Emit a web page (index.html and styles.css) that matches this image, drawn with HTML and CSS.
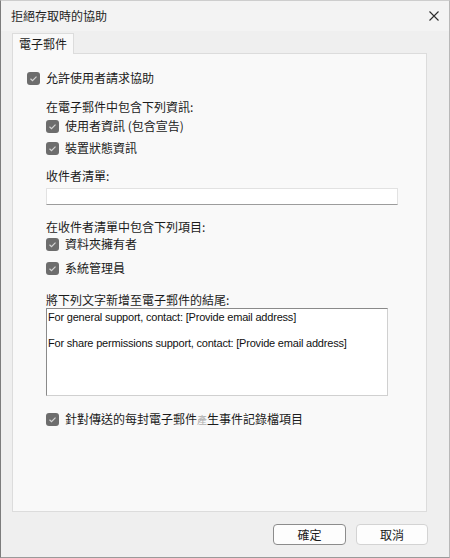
FILE: index.html
```html
<!DOCTYPE html>
<html lang="zh-Hant">
<head>
<meta charset="utf-8">
<title>拒絕存取時的協助</title>
<link rel="stylesheet" href="styles.css">
</head>
<body>
<div class="window">
  <div class="titlebar">
    <span class="title">拒絕存取時的協助</span>
    <svg class="close" width="10" height="10" viewBox="0 0 10 10"><path d="M0.5 0.5 L9.5 9.5 M9.5 0.5 L0.5 9.5" stroke="#2b2b2b" stroke-width="1.1" fill="none"/></svg>
  </div>
  <div class="body">
    <div class="tab">電子郵件</div>
    <div class="panel">
      <div class="row r1"><span class="cb"><svg width="13" height="13" viewBox="0 0 13 13"><path d="M3.5 6.8 L5.5 8.6 L9.5 4.6" stroke="#d6d6d6" stroke-width="1.2" fill="none"/></svg></span><span>允許使用者請求協助</span></div>
      <div class="group">
        <div class="label l1">在電子郵件中包含下列資訊:</div>
        <div class="row c1"><span class="cb"><svg width="13" height="13" viewBox="0 0 13 13"><path d="M3.5 6.8 L5.5 8.6 L9.5 4.6" stroke="#d6d6d6" stroke-width="1.2" fill="none"/></svg></span><span>使用者資訊 (包含宣告)</span></div>
        <div class="row c2"><span class="cb"><svg width="13" height="13" viewBox="0 0 13 13"><path d="M3.5 6.8 L5.5 8.6 L9.5 4.6" stroke="#d6d6d6" stroke-width="1.2" fill="none"/></svg></span><span>裝置狀態資訊</span></div>
        <div class="label l2">收件者清單:</div>
        <div class="input"></div>
        <div class="label l3">在收件者清單中包含下列項目:</div>
        <div class="row c3"><span class="cb"><svg width="13" height="13" viewBox="0 0 13 13"><path d="M3.5 6.8 L5.5 8.6 L9.5 4.6" stroke="#d6d6d6" stroke-width="1.2" fill="none"/></svg></span><span>資料夾擁有者</span></div>
        <div class="row c4"><span class="cb"><svg width="13" height="13" viewBox="0 0 13 13"><path d="M3.5 6.8 L5.5 8.6 L9.5 4.6" stroke="#d6d6d6" stroke-width="1.2" fill="none"/></svg></span><span>系統管理員</span></div>
        <div class="label l4">將下列文字新增至電子郵件的結尾:</div>
        <div class="textbox">
          <div class="line">For general support, contact: [Provide email address]</div>
          <div class="line">&nbsp;</div>
          <div class="line">For share permissions support, contact: [Provide email address]</div>
        </div>
        <div class="row c5"><span class="cb"><svg width="13" height="13" viewBox="0 0 13 13"><path d="M3.5 6.8 L5.5 8.6 L9.5 4.6" stroke="#d6d6d6" stroke-width="1.2" fill="none"/></svg></span><span>針對傳送的每封電子郵件<span class="odd">產</span>生事件記錄檔項目</span></div>
      </div>
    </div>
    <div class="buttons">
      <div class="btn default">確定</div>
      <div class="btn">取消</div>
    </div>
  </div>
</div>
</body>
</html>
```
FILE: styles.css
```css
html, body {
  margin: 0;
  padding: 0;
  background: #efefef;
}
body {
  font-family: "Noto Sans CJK TC", "Noto Sans", sans-serif;
  font-size: 12px;
  color: #1b1b1b;
}
.window {
  width: 450px;
  height: 558px;
  box-sizing: border-box;
  border-top: 1px solid #cdcdcd;
  border-left: 1px solid #7c7c7c;
  border-right: 1px solid #b8b8b8;
  border-bottom: 1px solid #9a9a9a;
  background: #efefef;
  display: flex;
  flex-direction: column;
}
.titlebar {
  height: 30px;
  flex: none;
  background: #f3f3f3;
  display: flex;
  align-items: center;
  justify-content: space-between;
  padding: 0 10px 0 10px;
}
.title {
  line-height: 16px;
  color: #1f1f1f;
}
.close {
  display: block;
}
.body {
  flex: 1;
  padding: 2px 22px 0 11px;
  display: flex;
  flex-direction: column;
}
.tab {
  width: 62px;
  height: 21px;
  box-sizing: border-box;
  border: 1px solid #dcdcdc;
  border-bottom: none;
  background: #f9f9f9;
  padding-left: 6px;
  line-height: 19px;
  margin-bottom: -1px;
  position: relative;
  z-index: 1;
}
.panel {
  height: 459px;
  box-sizing: border-box;
  border: 1px solid #dcdcdc;
  background: #f9f9f9;
  padding: 16px 0 0 14px;
}
.row {
  height: 16px;
  display: flex;
  align-items: center;
  gap: 6px;
  line-height: 16px;
}
.cb {
  width: 13px;
  height: 13px;
  border-radius: 3px;
  background: #6d6d6d;
  flex: none;
  display: block;
}
.cb svg {
  display: block;
}
.group {
  margin-left: 19px;
}
.label {
  height: 16px;
  line-height: 16px;
}
.l1 { margin-top: 13px; }
.c1 { margin-top: 3px; }
.c2 { margin-top: 6px; }
.l2 { margin-top: 12px; }
.input {
  margin-top: 4px;
  width: 352px;
  height: 17px;
  box-sizing: border-box;
  background: #ffffff;
  border: 1px solid #e2e2e2;
  border-bottom-color: #9c9c9c;
}
.l3 { margin-top: 14px; }
.c3 { margin-top: 1px; }
.c4 { margin-top: 8px; }
.l4 { margin-top: 16px; }
.textbox {
  width: 342px;
  height: 88px;
  box-sizing: border-box;
  background: #ffffff;
  border: 1px solid #d0d0d0;
  border-top-color: #8a8a8a;
  border-left-color: #8a8a8a;
  padding: 2px 0 0 1px;
  font-family: "Liberation Sans", Arial, sans-serif;
  font-size: 11px;
  letter-spacing: -0.2px;
  line-height: 13px;
  color: #111;
}
.c5 { margin-top: 15px; }
.odd {
  font-size: 10px;
  color: #b0b0b0;
}
.buttons {
  margin-top: 12px;
  margin-right: -1px;
  display: flex;
  justify-content: flex-end;
  gap: 10px;
}
.btn {
  width: 72px;
  height: 21px;
  box-sizing: border-box;
  border: 1px solid #d3d3d3;
  border-radius: 4px;
  background: #fdfdfd;
  text-align: center;
  line-height: 19px;
}
.btn.default {
  border-color: #8c8c8c;
  width: 73px;
}
```
